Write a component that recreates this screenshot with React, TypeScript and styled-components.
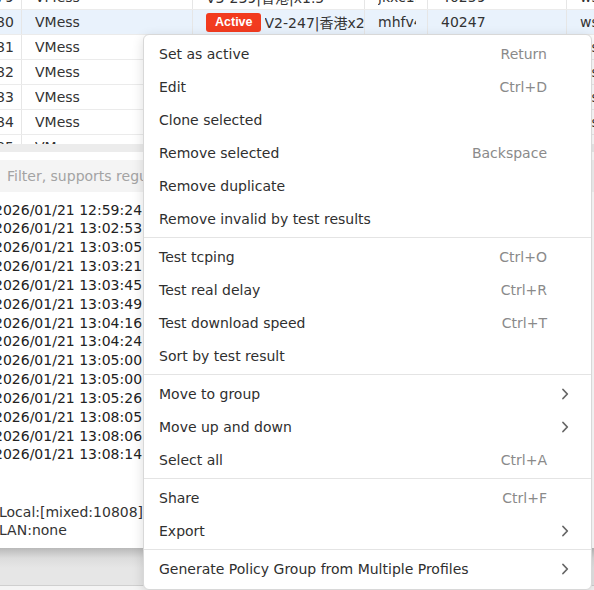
import React from "react"
import styled, { createGlobalStyle } from "styled-components"

const GlobalStyle = createGlobalStyle`
  html, body {
    margin: 0;
    padding: 0;
  }
  body {
    width: 594px;
    height: 590px;
    overflow: hidden;
    background: #fff;
    font-family: "DejaVu Sans", "Noto Sans CJK SC", sans-serif;
    font-size: 14px;
    color: #333;
  }
  * {
    box-sizing: border-box;
  }
`

interface Profile {
  index: string
  type: string
  name: string
  address: string
  port: string
  network: string
  active?: boolean
}

const profiles: Profile[] = [
  { index: "79", type: "VMess", name: "V3-239|香港|x1.5", address: "jkxc1f", port: "40259", network: "ws" },
  { index: "80", type: "VMess", name: "V2-247|香港x2", address: "mhfv4", port: "40247", network: "ws", active: true },
  { index: "81", type: "VMess", name: "V2-248|香港x2", address: "mhfv4", port: "40248", network: "ws" },
  { index: "82", type: "VMess", name: "V2-249|香港x2", address: "mhfv4", port: "40249", network: "ws" },
  { index: "83", type: "VMess", name: "V2-250|日本x2", address: "mhfv4", port: "40250", network: "ws" },
  { index: "84", type: "VMess", name: "V2-251|日本x2", address: "mhfv4", port: "40251", network: "ws" },
  { index: "85", type: "VMess", name: "V2-252|美国x2", address: "mhfv4", port: "40252", network: "ws" },
]

const logs = [
  "12:59:24",
  "13:02:53",
  "13:03:05",
  "13:03:21",
  "13:03:45",
  "13:03:49",
  "13:04:16",
  "13:04:24",
  "13:05:00",
  "13:05:00",
  "13:05:26",
  "13:08:05",
  "13:08:06",
  "13:08:14",
]

type Entry =
  | { kind: "item"; label: string; shortcut?: string; sub?: boolean }
  | { kind: "sep" }

const menu: Entry[] = [
  { kind: "item", label: "Set as active", shortcut: "Return" },
  { kind: "item", label: "Edit", shortcut: "Ctrl+D" },
  { kind: "item", label: "Clone selected" },
  { kind: "item", label: "Remove selected", shortcut: "Backspace" },
  { kind: "item", label: "Remove duplicate" },
  { kind: "item", label: "Remove invalid by test results" },
  { kind: "sep" },
  { kind: "item", label: "Test tcping", shortcut: "Ctrl+O" },
  { kind: "item", label: "Test real delay", shortcut: "Ctrl+R" },
  { kind: "item", label: "Test download speed", shortcut: "Ctrl+T" },
  { kind: "item", label: "Sort by test result" },
  { kind: "sep" },
  { kind: "item", label: "Move to group", sub: true },
  { kind: "item", label: "Move up and down", sub: true },
  { kind: "item", label: "Select all", shortcut: "Ctrl+A" },
  { kind: "sep" },
  { kind: "item", label: "Share", shortcut: "Ctrl+F" },
  { kind: "item", label: "Export", sub: true },
  { kind: "sep" },
  { kind: "item", label: "Generate Policy Group from Multiple Profiles", sub: true },
]

const Chevron = () => (
  <svg width="8" height="12" viewBox="0 0 8 12" fill="none">
    <path
      d="M2 1.5 L6.3 6 L2 10.5"
      stroke="#666"
      strokeWidth="1.8"
      strokeLinecap="round"
      strokeLinejoin="round"
    />
  </svg>
)

export default function App() {
  return (
    <Page>
      <GlobalStyle />
      <TableView>
        <TableInner>
          {profiles.map((p) => (
            <Row key={p.index} $active={p.active}>
              <IndexCell>{p.index}</IndexCell>
              <Cell>
                <CellText>{p.type}</CellText>
              </Cell>
              <NameCell>
                {p.active && <Badge>Active</Badge>}
                <CellText>{p.name}</CellText>
              </NameCell>
              <Cell>
                <CellText>{p.address}</CellText>
              </Cell>
              <Cell>
                <CellText>{p.port}</CellText>
              </Cell>
              <Cell>
                <CellText>{p.network}</CellText>
              </Cell>
            </Row>
          ))}
        </TableInner>
      </TableView>
      <ScrollTrack />
      <FilterBox>
        <FilterInput placeholder="Filter, supports regular expressions" />
      </FilterBox>
      <LogPanel>
        <LogList>
          {logs.map((t, i) => (
            <LogLine key={i}>2026/01/21 {t}</LogLine>
          ))}
        </LogList>
        <Status>
          <StatusLine>Local:[mixed:10808]</StatusLine>
          <StatusLine>LAN:none</StatusLine>
        </Status>
      </LogPanel>
      <BottomBar />

      <Menu>
        {menu.map((e, i) =>
          e.kind === "sep" ? (
            <Separator key={i} />
          ) : (
            <MenuItem key={i}>
              <Label>{e.label}</Label>
              <Shortcut>{e.shortcut}</Shortcut>
              <Arrow>{e.sub && <Chevron />}</Arrow>
            </MenuItem>
          )
        )}
      </Menu>
    </Page>
  )
}

const Page = styled.div`
  position: relative;
  width: 594px;
  height: 590px;
  overflow: hidden;
  display: flex;
  flex-direction: column;
`

const TableView = styled.div`
  height: 144px;
  overflow: hidden;
  flex-shrink: 0;
`

const TableInner = styled.div`
  margin-top: -15px;
  margin-left: -12px;
`

const Row = styled.div<{ $active?: boolean }>`
  display: grid;
  grid-template-columns: 34px 171px 172px 63px 139px 80px;
  height: 25px;
  border-bottom: 1px solid #ebebeb;
  background: ${(p) => (p.$active ? "#e9f2fc" : "#fff")};
`

const Cell = styled.div`
  display: flex;
  align-items: center;
  gap: 4px;
  min-width: 0;
  padding: 0 11px 0 13px;
  border-right: 1px solid #e6e6e6;
  white-space: nowrap;
  overflow: hidden;
`

const IndexCell = styled(Cell)`
  padding-left: 8px;
  padding-right: 0;
`

const NameCell = styled(Cell)`
  padding-right: 0;
`

const CellText = styled.span`
  display: block;
  overflow: hidden;
  white-space: nowrap;
  min-width: 0;
`

const Badge = styled.span`
  flex-shrink: 0;
  height: 19px;
  padding: 0 8px 0 9px;
  display: flex;
  align-items: center;
  border-radius: 3px;
  background: #f23b1f;
  color: #fff;
  font-family: "Liberation Sans", Arial, sans-serif;
  font-weight: 700;
  font-size: 12.5px;
`

const ScrollTrack = styled.div`
  height: 8px;
  flex-shrink: 0;
  background: #ececec;
`

const FilterBox = styled.div`
  padding-top: 8px;
  flex-shrink: 0;
`

const FilterInput = styled.input`
  display: block;
  width: 100%;
  height: 32px;
  border: none;
  outline: none;
  background: #f4f4f4;
  padding: 0 7px;
  font-family: "DejaVu Sans", sans-serif;
  font-size: 14px;
  color: #333;

  &::placeholder {
    color: #a3a3a3;
  }
`

const LogPanel = styled.div`
  height: 356px;
  flex-shrink: 0;
  display: flex;
  flex-direction: column;
  justify-content: space-between;
  padding: 8.5px 0 8.5px;
  background: #fff;
  color: #222;
`

const LogList = styled.div`
  margin-left: -6px;
`

const LogLine = styled.div`
  line-height: 18.85px;
  white-space: nowrap;
`

const Status = styled.div`
  margin-left: -1px;
  color: #333;
`

const StatusLine = styled.div`
  line-height: 18.5px;
  white-space: nowrap;
`

const BottomBar = styled.div`
  flex: 1;
  background: linear-gradient(to bottom, #b9b9b9 0, #dcdcdc 10px, #e6e6e6 20px, #e6e6e6 100%);
  border-bottom: 4px solid #f4f4f4;
  box-shadow: inset 0 -1px 0 #cfcfcf;
`

const Menu = styled.div`
  position: absolute;
  left: 143px;
  top: 34px;
  width: 449px;
  padding: 2px 0 4px;
  background: #fff;
  border: 1px solid #d8d8d8;
  border-radius: 6px;
  box-shadow: 0 3px 12px rgba(0, 0, 0, 0.14);
  z-index: 10;
`

const MenuItem = styled.div`
  display: grid;
  grid-template-columns: 1fr auto 44px;
  align-items: center;
  height: 33px;
  padding-left: 15px;
  font-size: 14px;
  color: #2f2f2f;
`

const Label = styled.span`
  white-space: nowrap;
`

const Shortcut = styled.span`
  color: #8a8a8a;
  white-space: nowrap;
`

const Arrow = styled.span`
  display: flex;
  align-items: center;
  padding-left: 14px;
`

const Separator = styled.div`
  height: 1px;
  margin: 2px 0;
  background: #e4e4e4;
`
